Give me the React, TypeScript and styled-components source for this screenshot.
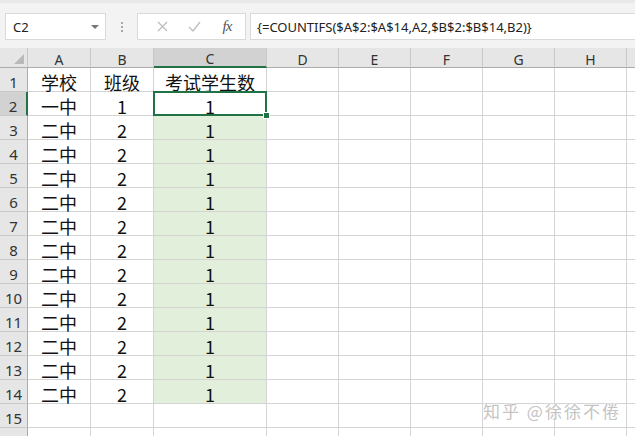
import React from 'react';
import styled, { createGlobalStyle, css } from 'styled-components';

const Global = createGlobalStyle`
  html, body { margin: 0; padding: 0; background: #fff; overflow: hidden; }
  #root { width: 635px; height: 436px; }
`;

const Shell = styled.div`
  width: 635px;
  height: 436px;
  overflow: hidden;
  position: relative;
  background: #fff;
  font-family: "Noto Sans CJK SC", "Noto Sans", sans-serif;
`;

const Toolbar = styled.div`
  height: 48px;
  box-sizing: border-box;
  background: #f3f3f3;
  border-top: 3px solid #e9e9e9;
  padding: 10px 0 0 5px;
  display: flex;
  align-items: flex-start;
`;

const NameBox = styled.div`
  width: 101px;
  height: 27px;
  box-sizing: border-box;
  background: #fff;
  border: 1px solid #dadada;
  display: flex;
  align-items: center;
  justify-content: space-between;
  padding: 0 6px 0 7px;
  font-family: "Noto Sans", sans-serif;
  font-size: 13px;
  color: #222;
`;

const Caret = styled.span`
  width: 0;
  height: 0;
  border-left: 4px solid transparent;
  border-right: 4px solid transparent;
  border-top: 4px solid #777;
  margin-top: 1px;
`;

const Grip = styled.div`
  width: 31px;
  height: 27px;
  display: flex;
  flex-direction: column;
  align-items: center;
  justify-content: center;
  gap: 2px;
`;

const GripDot = styled.span`
  width: 2px;
  height: 2px;
  background: #a8a8a8;
`;

const Actions = styled.div`
  width: 109px;
  height: 27px;
  box-sizing: border-box;
  background: #fff;
  border: 1px solid #dadada;
  display: flex;
  align-items: center;
  padding: 0 0 0 12px;
`;

const ActionIcon = styled.span<{ $w: number }>`
  width: ${p => p.$w}px;
  display: flex;
  align-items: center;
  justify-content: center;
`;

const Fx = styled.span`
  font-family: "Liberation Serif", serif;
  font-style: italic;
  font-size: 15px;
  color: #555;
  letter-spacing: -1px;
`;

const FormulaInput = styled.div`
  margin-left: 4px;
  flex: 1;
  height: 27px;
  box-sizing: border-box;
  background: #fff;
  border: 1px solid #dadada;
  border-right: none;
  display: flex;
  align-items: center;
  padding-left: 6px;
  font-family: "Noto Sans", sans-serif;
  font-size: 13px;
  color: #222;
  white-space: nowrap;
`;

const Sheet = styled.div`
  display: grid;
  grid-template-columns: 28px 63px 63px 113px repeat(6, 72px);
  grid-template-rows: 20px repeat(16, 24px);
`;

const Corner = styled.div`
  background: #e6e6e6;
  border-right: 1px solid #c6c6c6;
  border-bottom: 1px solid #ababab;
  box-sizing: border-box;
  display: flex;
  align-items: flex-end;
  justify-content: flex-end;
  padding: 0 3px 3px 0;
`;

const CornerMark = styled.span`
  width: 0;
  height: 0;
  border-left: 10px solid transparent;
  border-bottom: 10px solid #b9b9b9;
`;

const ColHead = styled.div<{ $active?: boolean }>`
  box-sizing: border-box;
  overflow: hidden;
  background: ${p => (p.$active ? '#d2d2d2' : '#e6e6e6')};
  border-right: 1px solid #c9c9c9;
  border-bottom: ${p => (p.$active ? '2px solid #217346' : '1px solid #ababab')};
  display: flex;
  align-items: center;
  justify-content: center;
  font-family: "Noto Sans", sans-serif;
  font-size: 14px;
  color: #333;
  padding-top: 3px;
`;

const RowHead = styled.div<{ $active?: boolean }>`
  box-sizing: border-box;
  background: ${p => (p.$active ? '#d2d2d2' : '#e6e6e6')};
  border-right: ${p => (p.$active ? '2px solid #217346' : '1px solid #ababab')};
  border-bottom: 1px solid #c9c9c9;
  display: flex;
  align-items: center;
  justify-content: center;
  font-family: "Noto Sans", sans-serif;
  font-size: 15px;
  line-height: 18px;
  padding-top: 5px;
  color: #333;
`;

const Cell = styled.div<{ $fill?: boolean; $selected?: boolean }>`
  position: relative;
  box-sizing: border-box;
  border-right: 1px solid #d4d4d4;
  border-bottom: 1px solid #d4d4d4;
  background: ${p => (p.$fill ? '#e2efda' : '#fff')};
  display: flex;
  align-items: center;
  justify-content: center;
  font-size: 18px;
  line-height: 20px;
  padding-top: 4px;
  color: #111;
  ${p =>
    p.$selected &&
    css`
      &::after {
        content: '';
        position: absolute;
        left: -1px;
        top: -1px;
        right: -1px;
        bottom: -1px;
        border: 2px solid #217346;
      }
    `}
`;

const FillHandle = styled.span`
  position: absolute;
  right: -4px;
  bottom: -4px;
  width: 5px;
  height: 5px;
  background: #217346;
  border: 1px solid #fff;
  z-index: 2;
`;

const Watermark = styled.div`
  position: absolute;
  left: 483px;
  top: 398px;
  font-family: "Noto Sans CJK SC", sans-serif;
  font-size: 17px;
  color: #c4c4c4;
  letter-spacing: 2px;
  text-shadow: 0 0 2px #fff, 0 0 2px #fff;
  white-space: nowrap;
`;

const columns = ['A', 'B', 'C', 'D', 'E', 'F', 'G', 'H', 'I'];

const rows: [string, string, string][] = [
  ['学校', '班级', '考试学生数'],
  ['一中', '1', '1'],
  ...Array.from({ length: 12 }, () => ['二中', '2', '1'] as [string, string, string]),
];

const visibleRows = 15;

export default function App() {
  return (
    <Shell>
      <Global />
      <Toolbar>
        <NameBox>
          <span>C2</span>
          <Caret />
        </NameBox>
        <Grip>
          <GripDot />
          <GripDot />
          <GripDot />
        </Grip>
        <Actions>
          <ActionIcon $w={24}>
            <svg width="11" height="11" viewBox="0 0 11 11">
              <path d="M1 1 L10 10 M10 1 L1 10" stroke="#bdbdbd" strokeWidth="1.3" fill="none" />
            </svg>
          </ActionIcon>
          <ActionIcon $w={40}>
            <svg width="13" height="11" viewBox="0 0 13 11">
              <path d="M1 6 L5 10 L12 1" stroke="#bdbdbd" strokeWidth="1.3" fill="none" />
            </svg>
          </ActionIcon>
          <ActionIcon $w={26}>
            <Fx>fx</Fx>
          </ActionIcon>
        </Actions>
        <FormulaInput>{'{=COUNTIFS($A$2:$A$14,A2,$B$2:$B$14,B2)}'}</FormulaInput>
      </Toolbar>
      <Sheet>
        <Corner>
          <CornerMark />
        </Corner>
        {columns.map(c => (
          <ColHead key={c} $active={c === 'C'}>
            {c === 'I' ? '' : c}
          </ColHead>
        ))}
        {Array.from({ length: visibleRows + 1 }, (_, i) => {
          const r = i + 1;
          const data = rows[i];
          return (
            <React.Fragment key={r}>
              <RowHead $active={r === 2}>{r <= visibleRows ? r : ''}</RowHead>
              {columns.map((c, ci) => {
                const value = data && ci < 3 ? data[ci] : '';
                const fill = c === 'C' && r >= 2 && r <= 14;
                const selected = c === 'C' && r === 2;
                return (
                  <Cell key={c} $fill={fill && !selected} $selected={selected}>
                    {value}
                    {selected && <FillHandle />}
                  </Cell>
                );
              })}
            </React.Fragment>
          );
        })}
      </Sheet>
      <Watermark>知乎 @徐徐不倦</Watermark>
    </Shell>
  );
}
